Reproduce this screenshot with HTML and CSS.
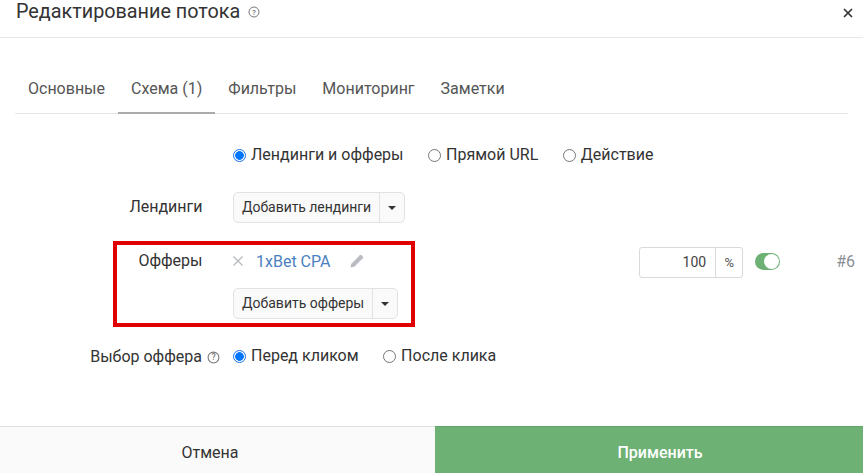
FILE: index.html
```html
<!DOCTYPE html>
<html lang="ru">
<head>
<meta charset="utf-8">
<title>Редактирование потока</title>
<link rel="stylesheet" href="styles.css">
</head>
<body>
<div class="modal">
  <header class="head">
    <h1 class="title">Редактирование потока</h1>
    <svg class="help help-title" viewBox="0 0 12 12"><circle cx="6" cy="6" r="5" fill="none" stroke="#777" stroke-width="1"/><text x="6" y="8.7" text-anchor="middle" class="help-q">?</text></svg>
    <svg class="close" viewBox="0 0 10 10"><path d="M1 1L9 9M9 1L1 9" stroke="#333" stroke-width="1.7" fill="none"/></svg>
  </header>
  <nav class="tabs">
    <a class="tab">Основные</a>
    <a class="tab active">Схема (1)</a>
    <a class="tab">Фильтры</a>
    <a class="tab">Мониторинг</a>
    <a class="tab">Заметки</a>
  </nav>
  <main class="form">
    <div class="row row-type">
      <div class="label"></div>
      <div class="radios">
        <label class="radio"><span class="dot on"></span>Лендинги и офферы</label>
        <label class="radio"><span class="dot"></span>Прямой URL</label>
        <label class="radio"><span class="dot"></span>Действие</label>
      </div>
    </div>
    <div class="row row-land">
      <div class="label">Лендинги</div>
      <div class="split"><span class="split-main split-main-land">Добавить лендинги</span><span class="split-caret"><i class="caret"></i></span></div>
    </div>
    <div class="row row-offers">
      <div class="label label-offers">Офферы</div>
      <div class="offers">
        <div class="offer">
          <svg class="remove" viewBox="0 0 10 10"><path d="M0.5 0.5L9.5 9.5M9.5 0.5L0.5 9.5" stroke="#b4b8bd" stroke-width="1.2" fill="none"/></svg>
          <a class="offer-name">1xBet CPA</a>
          <svg class="pencil" viewBox="0 0 14 14"><path d="M0.5 13.5L1.3 9.7L9.8 1.2Q10.6 0.5 11.4 1.2L12.8 2.6Q13.5 3.4 12.8 4.2L4.3 12.7Z" fill="#b9bcc0"/></svg>
        </div>
        <div class="split"><span class="split-main">Добавить офферы</span><span class="split-caret"><i class="caret"></i></span></div>
      </div>
      <div class="weight">
        <div class="percent"><span class="percent-val">100</span><span class="percent-unit">%</span></div>
        <span class="toggle"><i class="knob"></i></span>
        <span class="num">#6</span>
      </div>
      <div class="highlight"></div>
    </div>
    <div class="row row-choice">
      <div class="label">Выбор оффера<svg class="help help-label" viewBox="0 0 12 12"><circle cx="6" cy="6" r="5" fill="none" stroke="#777" stroke-width="1"/><text x="6" y="8.7" text-anchor="middle" class="help-q">?</text></svg></div>
      <div class="radios radios-choice">
        <label class="radio"><span class="dot on"></span>Перед кликом</label>
        <label class="radio"><span class="dot"></span>После клика</label>
      </div>
    </div>
  </main>
  <footer class="foot">
    <button class="btn-cancel">Отмена</button>
    <button class="btn-apply">Применить</button>
  </footer>
</div>
</body>
</html>
```
FILE: styles.css
```css
* { box-sizing: border-box; }
html, body { margin: 0; padding: 0; }
body { width: 863px; height: 473px; overflow: hidden; background: #fff; font-family: Roboto, sans-serif; color: #333; font-size: 15px; }
.modal { display: flex; flex-direction: column; height: 473px; }
.head { display: flex; align-items: center; height: 38px; padding: 0 10px 14px 16px; border-bottom: 1px solid #e7e7e7; flex: none; }
.title { margin: 0; font-size: 19.8px; font-weight: 400; line-height: 24px; color: #333; }
.help { display: block; flex: none; }
.help-q { font: 500 8px Roboto, sans-serif; fill: #777; }
.help-title { width: 12px; height: 12px; margin-left: 8px; }
.close { width: 10px; height: 10px; margin: 2px 0 0 auto; }
.tabs { display: flex; margin: 37px 15px 0; height: 39px; border-bottom: 1px solid #e7e7e7; flex: none; }
.tab { padding: 0 13px; height: 38px; line-height: 27px; font-size: 16px; color: #555; }
.active { border-bottom: 2px solid #aaa; height: 39px; }
.form { flex: 1; padding-top: 29px; }
.row { display: flex; position: relative; }
.label { width: 202.5px; flex: none; text-align: right; font-size: 16px; line-height: 24px; color: #333; }
.radios { display: flex; margin-left: 30.5px; gap: 24.5px; line-height: 24px; font-size: 16px; }
.radio { display: flex; align-items: center; gap: 5px; color: #333; }
.dot { width: 13px; height: 13px; border-radius: 50%; border: 1px solid #767676; background: #fff; flex: none; margin-top: 1px; }
.dot.on { border: 1px solid #1a73e8; background: radial-gradient(circle, #0075ff 0 4px, #fff 4.6px); }
.row-land { margin-top: 25px; align-items: center; }
.row-land .label { padding-bottom: 2px; }
.split { display: inline-flex; height: 31px; margin-left: 30.5px; border: 1px solid #e2e2e2; border-radius: 5px; background: #fafafa; font-size: 14px; line-height: 29px; color: #333; width: max-content; }
.split-main { padding: 0 7.6px 0 8px; }
.split-main-land { letter-spacing: -0.05px; }
.split-caret { width: 25px; border-left: 1px solid #e2e2e2; display: flex; align-items: center; justify-content: center; }
.caret { border: 4px solid transparent; border-top-color: #333; border-bottom: 0; display: block; }
.row-offers { margin-top: 20px; height: 89px; }
.label-offers { padding-top: 6px; }
.offers { display: flex; flex-direction: column; margin-left: 30.5px; }
.offers .split { margin-left: 0; margin-top: 15px; }
.offer { display: flex; align-items: center; height: 24px; margin-top: 6px; }
.remove { width: 10px; height: 10px; margin-right: 13px; flex: none; }
.offer-name { font-size: 16px; color: #4a7fc1; }
.pencil { width: 14px; height: 14px; margin-left: 20px; flex: none; }
.weight { display: flex; align-items: center; height: 31px; margin-left: auto; margin-top: 4px; padding-right: 8px; }
.percent { display: flex; width: 104px; height: 31px; border: 1px solid #d9d9de; border-radius: 3px; font-size: 14px; line-height: 29px; }
.percent-val { flex: 1; text-align: right; padding-right: 9px; color: #444; }
.percent-unit { width: 27px; border-left: 1px solid #d9d9de; text-align: center; font-size: 13px; color: #555; }
.toggle { display: block; width: 25px; height: 17px; margin: 0 0 3px 12px; border-radius: 9px; background: #6db174; position: relative; }
.knob { position: absolute; right: 1px; top: 1px; width: 15px; height: 15px; border-radius: 50%; background: #fff; }
.num { margin: 0 0 3px 56px; font-size: 16px; color: #8a8f96; }
.highlight { position: absolute; left: 113px; top: -2px; width: 302px; height: 86px; border: 4px solid #e10000; pointer-events: none; }
.row-choice { margin-top: 11px; }
.row-choice .label { display: flex; align-items: center; justify-content: flex-end; padding-top: 2px; width: 220px; }
.radios-choice { margin-left: 13px; }
.help-label { width: 13px; height: 13px; margin: 0 0 0 5px; }
.foot { display: flex; height: 47px; flex: none; }
.btn-cancel, .btn-apply { border: 0; margin: 0; font: 400 16px Roboto, sans-serif; }
.btn-cancel { width: 435px; background: #fafafa; border-top: 1px solid #e0e0e0; color: #333; padding: 4px 15px 0 0; }
.btn-apply { flex: 1; background: #6db174; border-top: 1px solid #64a56c; color: #fff; font-weight: 500; padding: 4px 0 0 22px; }
```
